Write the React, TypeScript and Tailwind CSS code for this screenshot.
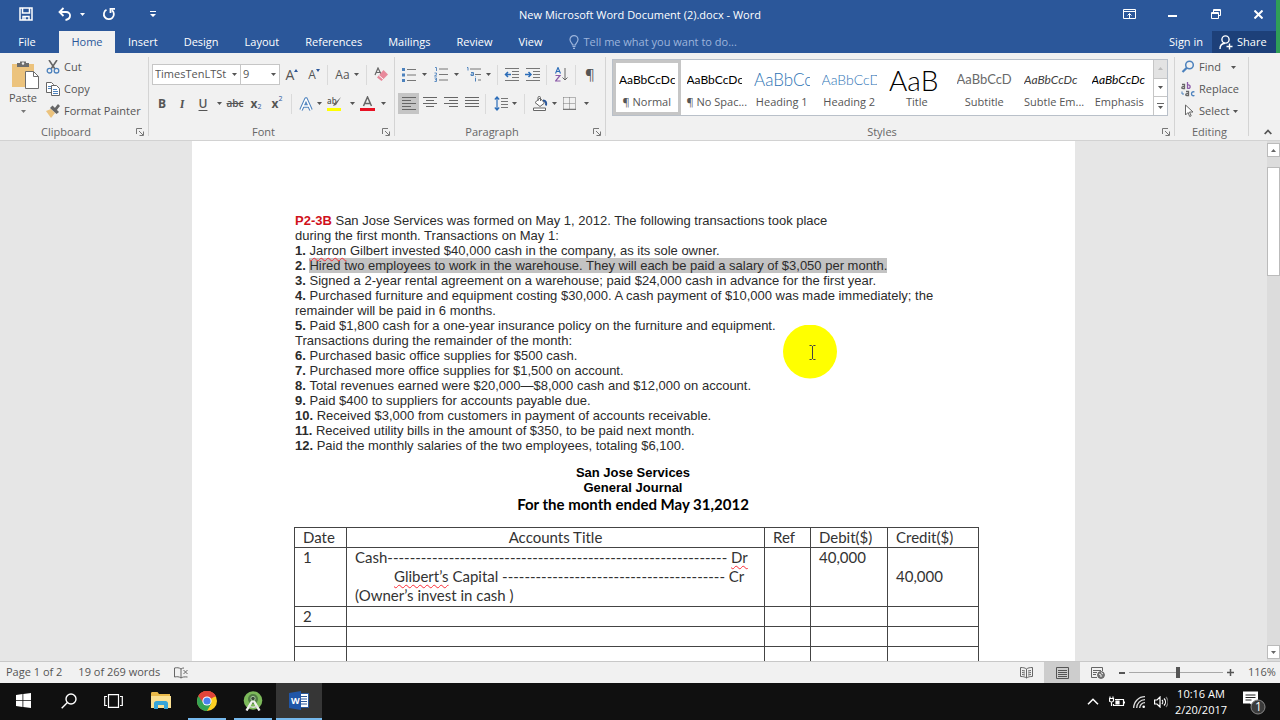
import type { ReactNode } from "react";
import clsx from "clsx";

const tabs = ["Insert", "Design", "Layout", "References", "Mailings", "Review", "View"];

const styleTiles = [
  { name: "¶ Normal", sample: "AaBbCcDc", look: "text-[12px] text-black" },
  { name: "¶ No Spac...", sample: "AaBbCcDc", look: "text-[12px] text-black" },
  { name: "Heading 1", sample: "AaBbCc", look: "text-[17px] font-light text-[#2e74b5]" },
  { name: "Heading 2", sample: "AaBbCcD", look: "text-[14px] font-light text-[#2e74b5]" },
  { name: "Title", sample: "AaB", look: "text-[28px] font-light text-black" },
  { name: "Subtitle", sample: "AaBbCcD", look: "text-[13px] text-[#6a6a6a]" },
  { name: "Subtle Em...", sample: "AaBbCcDc", look: "text-[12px] italic text-[#404040]" },
  { name: "Emphasis", sample: "AaBbCcDc", look: "text-[12px] italic text-black" },
];

const transactions = [
  { no: "3.", text: "Signed a 2-year rental agreement on a warehouse; paid $24,000 cash in advance for the first year." },
  { no: "4.", text: "Purchased furniture and equipment costing $30,000. A cash payment of $10,000 was made immediately; the" },
  { no: "", text: "remainder will be paid in 6 months." },
  { no: "5.", text: "Paid $1,800 cash for a one-year insurance policy on the furniture and equipment." },
  { no: "", text: "Transactions during the remainder of the month:" },
  { no: "6.", text: "Purchased basic office supplies for $500 cash." },
  { no: "7.", text: "Purchased more office supplies for $1,500 on account." },
  { no: "8.", text: "Total revenues earned were $20,000—$8,000 cash and $12,000 on account." },
  { no: "9.", text: "Paid $400 to suppliers for accounts payable due." },
  { no: "10.", text: "Received $3,000 from customers in payment of accounts receivable." },
  { no: "11.", text: "Received utility bills in the amount of $350, to be paid next month." },
  { no: "12.", text: "Paid the monthly salaries of the two employees, totaling $6,100." },
];

function Caret({ className }: { className?: string }) {
  return (
    <svg className={clsx("h-[3px] w-[5px] shrink-0", className)} viewBox="0 0 5 3" fill="currentColor">
      <path d="M0 0h5L2.5 3z" />
    </svg>
  );
}

function Launcher() {
  return (
    <svg className="h-2 w-2" viewBox="0 0 8 8" fill="none" stroke="#777">
      <path d="M.5 6V.5H6M3 3l4 4M7.500 3.500v4h-4" />
    </svg>
  );
}

function Tool({ label, width, active, children }: { label: string; width: string; active?: boolean; children: ReactNode }) {
  return (
    <button
      aria-label={label}
      className={clsx("flex h-[21px] shrink-0 items-center justify-center", width, active && "bg-[#c5c5c5]")}
    >
      {children}
    </button>
  );
}

function Divider() {
  return <span className="mx-[3px] h-5 w-px shrink-0 bg-[#dadada]" />;
}

function Group({ title, className, launcher = true, children }: { title: string; className: string; launcher?: boolean; children: ReactNode }) {
  return (
    <section className={clsx("flex flex-col", className)}>
      <div className="min-h-0 flex-1">{children}</div>
      <div className="flex h-4 items-center gap-1 pr-1">
        <span className="flex-1 text-center text-[#666]">{title}</span>
        {launcher && (
          <button aria-label={`${title} settings`}>
            <Launcher />
          </button>
        )}
      </div>
    </section>
  );
}

function GroupLine() {
  return <span className="my-1 w-px shrink-0 bg-[#d4d4d4]" />;
}

function Lines({ d }: { d: string }) {
  return (
    <svg className="h-[13px] w-[14px]" viewBox="0 0 14 13" stroke="#666" fill="none">
      <path d={d} />
    </svg>
  );
}

function TitleBar() {
  return (
    <div className="grid h-[31px] grid-cols-[1fr_auto_1fr] text-white">
      <div className="flex items-center pb-[3px] pl-[15px]">
        <button aria-label="Save" className="w-[21px]">
          <svg className="mx-auto h-[14px] w-[14px]" viewBox="0 0 14 14" fill="none" stroke="currentColor" strokeWidth="1.500">
            <path d="M1 1h12v12H1zM3.500 1v5h7V1M4 13V9.500h6V13M6 10v3" />
          </svg>
        </button>
        <button aria-label="Undo" className="ml-[22px] w-4">
          <svg className="h-[14px] w-[14px]" viewBox="0 0 14 14" fill="none" stroke="currentColor" strokeWidth="1.800">
            <path d="M5.500 1L1.500 5l4 4M1.500 5H8c5.500 0 5.500 7-.5 8" />
          </svg>
        </button>
        <button aria-label="Undo history" className="ml-1.5 w-[10px]">
          <Caret />
        </button>
        <button aria-label="Repeat" className="ml-3 w-[14px]">
          <svg className="h-[14px] w-[14px]" viewBox="0 0 14 14" fill="none" stroke="currentColor" strokeWidth="1.800">
            <path d="M4.500 2.800a5 5 0 1 0 5.500.5M8.500 6V1.800h4.500" />
          </svg>
        </button>
        <button aria-label="Customize Quick Access Toolbar" className="ml-[34px]">
          <svg className="h-[6px] w-[6px]" viewBox="0 0 6 6" fill="currentColor">
            <path d="M0 0h6v1H0zM0 3h6L3 6z" />
          </svg>
        </button>
      </div>
      <h1 className="self-center">New Microsoft Word Document (2).docx - Word</h1>
      <div className="flex justify-end pb-[3px]">
        <button aria-label="Ribbon Display Options" className="flex w-[43px] items-center justify-center">
          <svg className="h-[10px] w-[13px]" viewBox="0 0 13 10" fill="none" stroke="currentColor">
            <path d="M.5.5h12v9H.5zM.5 2.500h12M6.500 9V4.500M4.500 6.500l2-2 2 2" />
          </svg>
        </button>
        <button aria-label="Minimize" className="flex w-[43px] items-center justify-center">
          <span className="mt-[3px] h-[2px] w-[9px] bg-white" />
        </button>
        <button aria-label="Restore Down" className="flex w-[43px] items-center justify-center">
          <svg className="h-[10px] w-[10px]" viewBox="0 0 10 10" fill="none" stroke="currentColor">
            <path d="M.5 3.500h7v6h-7zM.5 4.500h7M2.500 3V.5h7v6H8M2.500 1.500h7" />
          </svg>
        </button>
        <button aria-label="Close" className="flex w-[43px] items-center justify-center">
          <svg className="h-[9px] w-[9px]" viewBox="0 0 9 9" stroke="currentColor" strokeWidth="2">
            <path d="M.5.5l8 8M8.500.5l-8 8" />
          </svg>
        </button>
      </div>
    </div>
  );
}

function TabRow() {
  return (
    <nav className="flex h-[22px] items-stretch text-white">
      <button className="w-[54px]">File</button>
      <button className="ml-[5px] w-14 bg-[#f1f1f1] text-[#2b579a]">Home</button>
      {tabs.map((t) => (
        <button key={t} className="px-[13px]">
          {t}
        </button>
      ))}
      <label className="ml-[14px] flex items-center gap-1 text-[#9db5dc]">
        <svg className="h-[14px] w-[10px]" viewBox="0 0 10 14" fill="none" stroke="currentColor" strokeWidth="1.200">
          <path d="M3.500 10C3.500 8 1 7.500 1 4.600a4 4 0 0 1 8 0C9 7.500 6.500 8 6.500 10zM3.500 11.500h3M4 13.300h2" />
        </svg>
        <input
          aria-label="Tell me what you want to do"
          placeholder="Tell me what you want to do..."
          className="w-44 bg-transparent outline-none placeholder:text-[#9db5dc]"
        />
      </label>
      <button className="ml-auto px-[9px]">Sign in</button>
      <button className="flex w-[68px] items-center gap-1 bg-[#1d4079] pl-[7px]">
        <svg className="h-[15px] w-[14px]" viewBox="0 0 14 15" fill="none" stroke="currentColor" strokeWidth="1.400">
          <circle cx="6.500" cy="4.500" r="3.600" />
          <path d="M1 14c0-3.500 2-5.600 5-5.800M10.500 8.500v6M7.500 11.500h6" />
        </svg>
        Share
      </button>
    </nav>
  );
}

function ClipboardGroup() {
  return (
    <Group title="Clipboard" className="w-[148px]">
      <div className="flex pt-[3px]">
        <button className="flex w-[46px] flex-col items-center pt-1">
          <svg className="ml-1 h-[30px] w-7" viewBox="0 0 28 30">
            <path d="M1 4h22v23H1z" fill="#ecc37d" />
            <path d="M6 7V3h3V1.500h6V3h3v4z" fill="#6d6d6d" />
            <circle cx="12" cy="3.500" r="1.200" fill="#f1f1f1" />
            <path d="M14.500 11.500h8l5 5v12h-13z" fill="#fff" stroke="#6d6d6d" />
            <path d="M22.500 11.500v5h5" fill="none" stroke="#6d6d6d" />
          </svg>
          <span className="leading-4">Paste</span>
          <Caret className="mt-1 text-[#777]" />
        </button>
        <div className="flex flex-col items-start">
          <button className="flex h-[22px] items-center gap-1">
            <svg className="h-[14px] w-[14px]" viewBox="0 0 14 14" fill="none" strokeWidth="1.300">
              <path d="M3 0l6 9M11 0L5 9" stroke="#666" strokeWidth="1.600" />
              <circle cx="3.500" cy="10.700" r="2.300" stroke="#4d82bd" />
              <circle cx="10.500" cy="10.700" r="2.300" stroke="#4d82bd" />
            </svg>
            Cut
          </button>
          <button className="flex h-[22px] items-center gap-1">
            <svg className="h-[14px] w-[14px]" viewBox="0 0 14 14" fill="#fff" stroke="#666">
              <path d="M.5.5h5l2 2v8h-7z" />
              <path d="M2 4.500h3M2 6.500h3" stroke="#4d82bd" />
              <path d="M5.500 3.500h5l3 3v7h-8z" />
              <path d="M7 7.500h4M7 9.500h5M7 11.500h5" stroke="#4d82bd" />
            </svg>
            Copy
          </button>
          <button className="flex h-[22px] items-center gap-1">
            <svg className="h-[14px] w-[14px]" viewBox="0 0 14 14">
              <path d="M0 7l5-2 4 4-4 5z" fill="#ecc37d" />
              <path d="M4 4l2.500-2.500 6.500 6.500-2.500 2z" fill="#666" />
              <path d="M8 5l4-5 2 2-4 5z" fill="#666" />
            </svg>
            Format Painter
          </button>
        </div>
      </div>
    </Group>
  );
}

function FontGroup() {
  return (
    <Group title="Font" className="w-[245px]">
      <div className="flex flex-col gap-2 pt-[11px] pl-[3px]">
        <div className="flex items-center">
          <span className="relative">
            <select aria-label="Font" className="h-[21px] w-[89px] appearance-none border border-[#c6c6c6] bg-white pl-0.5">
              <option>TimesTenLTSt</option>
            </select>
            <Caret className="pointer-events-none absolute top-[9px] right-1" />
          </span>
          <span className="relative -ml-px">
            <select aria-label="Font size" className="h-[21px] w-10 appearance-none border border-[#c6c6c6] bg-white pl-0.5">
              <option>9</option>
            </select>
            <Caret className="pointer-events-none absolute top-[9px] right-1" />
          </span>
          <Tool label="Grow Font" width="w-6">
            <span className="text-[14px]">A</span>
            <svg className="mb-2 h-[3px] w-1" viewBox="0 0 4 3" fill="#2b579a"><path d="M0 3h4L2 0z" /></svg>
          </Tool>
          <Tool label="Shrink Font" width="w-[20px]">
            <span className="text-[12px]">A</span>
            <svg className="mb-2 h-[3px] w-1" viewBox="0 0 4 3" fill="#2b579a"><path d="M0 0h4L2 3z" /></svg>
          </Tool>
          <Divider />
          <Tool label="Change Case" width="w-8">
            <span className="mr-1 text-[12px]">Aa</span>
            <Caret />
          </Tool>
          <Divider />
          <Tool label="Clear All Formatting" width="w-[22px]">
            <svg className="h-[15px] w-[14px]" viewBox="0 0 14 15" fill="none">
              <path d="M1 8L4 1l3 6M2 5.500h4" stroke="#666" strokeWidth="1.200" />
              <path d="M3 10.500L9.500 3 14 7.500 7.500 14z" fill="#e8899b" />
              <path d="M5 8.500l4.500 4" stroke="#fff" />
            </svg>
          </Tool>
        </div>
        <div className="flex items-center text-[12px]">
          <Tool label="Bold" width="w-5"><b>B</b></Tool>
          <Tool label="Italic" width="w-5"><i className="font-serif font-bold">I</i></Tool>
          <Tool label="Underline" width="w-[22px]"><span className="font-semibold underline underline-offset-2">U</span></Tool>
          <Tool label="Underline style" width="w-[10px]"><Caret /></Tool>
          <Tool label="Strikethrough" width="w-[22px]"><span className="text-[10px] font-semibold line-through">abc</span></Tool>
          <Tool label="Subscript" width="w-5"><b>x</b><span className="mt-2 text-[7px] text-[#2b579a]">2</span></Tool>
          <Tool label="Superscript" width="w-[22px]"><b>x</b><span className="mb-2 text-[7px] text-[#2b579a]">2</span></Tool>
          <Divider />
          <Tool label="Text Effects" width="w-[30px]">
            <svg className="mr-1 h-[14px] w-[14px]" viewBox="0 0 14 14" fill="none" strokeLinejoin="round">
              <path d="M2 13L7 2l5 11M4 9h6" stroke="#4d82bd" strokeWidth="3.600" />
              <path d="M2 13L7 2l5 11M4 9h6" stroke="#fff" strokeWidth="1.600" />
            </svg>
            <Caret />
          </Tool>
          <Tool label="Text Highlight Color" width="w-8">
            <svg className="mr-2 h-[15px] w-[15px]" viewBox="0 0 15 15">
              <text x="0" y="8" fontSize="8" fontWeight="600" fill="#555">ab</text>
              <path d="M14 1l-5 8-3 1 1-2z" fill="#666" />
              <path d="M0 12h14v3H0z" fill="#ff0" />
            </svg>
            <Caret />
          </Tool>
          <Tool label="Font Color" width="w-8">
            <svg className="mr-1.5 h-[15px] w-[15px]" viewBox="0 0 15 15">
              <path d="M3.500 10L7.500 1l4 9M5 7.500h5" fill="none" stroke="#666" strokeWidth="1.500" />
              <path d="M0 12h15v3H0z" fill="#e81123" />
            </svg>
            <Caret />
          </Tool>
        </div>
      </div>
    </Group>
  );
}

function ParagraphGroup() {
  return (
    <Group title="Paragraph" className="w-[210px]">
      <div className="flex flex-col gap-2 pt-[11px] pl-[3px]">
        <div className="flex items-center">
          <Tool label="Bullets" width="w-8">
            <svg className="mr-1.5 h-[14px] w-[14px]" viewBox="0 0 14 14">
              <path d="M0 0h3v3H0zM0 5.500h3v3H0zM0 11h3v3H0z" fill="#4d82bd" />
              <path d="M5 1.500h9M5 7h9M5 12.500h9" stroke="#777" />
            </svg>
            <Caret />
          </Tool>
          <Tool label="Numbering" width="w-8">
            <svg className="mr-1.5 h-[15px] w-[14px]" viewBox="0 0 14 15">
              <path d="M1 .5h1.500V4M.5 6h2v1.500l-2 1.500h2.500M.5 11h2v3.500h-2M1 12.700h1.500" stroke="#4d82bd" fill="none" strokeWidth=".9" />
              <path d="M5 2h9M5 7.500h9M5 13h9" stroke="#777" />
            </svg>
            <Caret />
          </Tool>
          <Tool label="Multilevel List" width="w-8">
            <svg className="mr-1 h-[15px] w-[16px]" viewBox="0 0 16 15">
              <path d="M1 .5h1v3M5 5.500h2.500v3H5V7h2.500M9.500 11v3.500M9.500 9.500v.8" stroke="#4d82bd" fill="none" />
              <path d="M4 2h11M9 7.500h6M12 13h3" stroke="#777" />
            </svg>
            <Caret />
          </Tool>
          <Divider />
          <Tool label="Decrease Indent" width="w-[21px]">
            <svg className="h-[13px] w-[15px]" viewBox="0 0 15 13" fill="none" stroke="#777">
              <path d="M1 .5h14M8 3.500h7M8 6.500h7M8 9.500h7M1 12.500h14" />
              <path d="M7 6.500H1.500M4 4L1.500 6.500 4 9" stroke="#2b6cb8" strokeWidth="1.500" />
            </svg>
          </Tool>
          <Tool label="Increase Indent" width="w-[21px]">
            <svg className="h-[13px] w-[15px]" viewBox="0 0 15 13" fill="none" stroke="#777">
              <path d="M1 .5h14M8 3.500h7M8 6.500h7M8 9.500h7M1 12.500h14" />
              <path d="M0 6.500h5.500M3.500 4L6 6.500 3.500 9" stroke="#2b6cb8" strokeWidth="1.500" />
            </svg>
          </Tool>
          <Divider />
          <Tool label="Sort" width="w-[22px]">
            <svg className="h-[15px] w-[13px]" viewBox="0 0 13 15" fill="none">
              <path d="M.5 6.500L3 .5l2.500 6M1.500 4.500h3" stroke="#2b6cb8" strokeWidth="1.100" />
              <path d="M.5 8.500h4.500l-4.500 5.500H5.500" stroke="#8b5aa8" strokeWidth="1.200" />
              <path d="M10 1v12M7.500 10.500L10 13l2.500-2.500" stroke="#666" />
            </svg>
          </Tool>
          <Divider />
          <Tool label="Show/Hide" width="w-[22px]">
            <span className="text-[15px]">¶</span>
          </Tool>
        </div>
        <div className="flex items-center">
          <Tool label="Align Left" width="w-[21px]" active><Lines d="M0 .5h14M0 3.500h9M0 6.500h14M0 9.500h9M0 12.500h14" /></Tool>
          <Tool label="Center" width="w-[21px]"><Lines d="M0 .5h14M3 3.500h8M0 6.500h14M3 9.500h8" /></Tool>
          <Tool label="Align Right" width="w-[21px]"><Lines d="M0 .5h14M5 3.500h9M0 6.500h14M5 9.500h9" /></Tool>
          <Tool label="Justify" width="w-[21px]"><Lines d="M0 .5h14M0 3.500h14M0 6.500h14M0 9.500h14" /></Tool>
          <Divider />
          <Tool label="Line Spacing" width="w-[32px]">
            <svg className="mr-1 h-[15px] w-[14px]" viewBox="0 0 14 15" fill="none">
              <path d="M3 1v13M.8 3.500L3 1l2.200 2.500M.8 11.500L3 14l2.200-2.500" stroke="#2b6cb8" strokeWidth="1.200" />
              <path d="M7 2.500h7M7 5.500h7M7 8.500h7M7 11.500h7" stroke="#777" />
            </svg>
            <Caret />
          </Tool>
          <Divider />
          <Tool label="Shading" width="w-[32px]">
            <svg className="mr-1 h-[15px] w-[16px]" viewBox="0 0 16 15" fill="none" stroke="#666">
              <path d="M3 6.500L8 2l4.500 5L8 10.500z" fill="#fff" />
              <path d="M6 5V1.500c0-1.500 2.500-1.500 2.500 0V5" />
              <path d="M11 4.500c3 0 3.500 2 3 5" stroke="#2b579a" strokeWidth="2" />
              <path d="M1.500 12h12v2.500h-12z" fill="#fff" />
            </svg>
            <Caret />
          </Tool>
          <Tool label="Borders" width="w-8">
            <svg className="mr-2 h-[13px] w-[13px]" viewBox="0 0 13 13" fill="none" stroke="#777">
              <path d="M.5.5h12v11M.5.5v11M6.500.5v11M.5 6.500h12" strokeDasharray="1 1" />
              <path d="M0 12.500h13" strokeWidth="1.500" />
            </svg>
            <Caret />
          </Tool>
        </div>
      </div>
    </Group>
  );
}

function StylesGroup() {
  return (
    <Group title="Styles" className="min-w-0 flex-1">
      <div className="mx-1.5 mt-1.5 flex h-[57px] border border-[#b9c0c9] bg-white">
        <div className="flex min-w-0 flex-1">
          {styleTiles.map((s, i) => (
            <button
              key={s.name}
              className={clsx("flex min-w-0 flex-1 flex-col border-[3px] px-[3px]", i === 0 ? "border-[#c6c6c6]" : "border-transparent")}
            >
              <span
                className={clsx(
                  "flex h-[30px] w-full items-center overflow-hidden pt-1 font-['Lato',sans-serif] leading-none whitespace-nowrap",
                  s.look,
                )}
              >
                {s.sample}
              </span>
              <span className="w-full text-center leading-5 whitespace-nowrap">{s.name}</span>
            </button>
          ))}
        </div>
        <div className="flex w-[14px] flex-col border-l border-[#c6c6c6]">
          <button aria-label="Previous styles" className="flex flex-1 items-center justify-center bg-[#e3e3e3] text-[#bbb]">
            <Caret className="rotate-180" />
          </button>
          <button aria-label="Next styles" className="flex flex-1 items-center justify-center border-y border-[#c6c6c6]">
            <Caret />
          </button>
          <button aria-label="More styles" className="flex flex-1 flex-col items-center justify-center gap-0.5">
            <span className="h-px w-[7px] bg-[#666]" />
            <Caret />
          </button>
        </div>
      </div>
    </Group>
  );
}

function EditingGroup() {
  return (
    <Group title="Editing" className="w-[73px]" launcher={false}>
      <div className="flex flex-col items-start pt-[3px] pl-[6px]">
        <button className="flex h-[22px] items-center gap-1">
          <svg className="h-[14px] w-[14px]" viewBox="0 0 14 14" fill="none">
            <circle cx="8.500" cy="5" r="3.800" stroke="#4d82bd" strokeWidth="1.500" />
            <path d="M5.800 7.700L1.500 12" stroke="#4d82bd" strokeWidth="2.200" />
          </svg>
          Find
          <Caret className="ml-1.5" />
        </button>
        <button className="flex h-[22px] items-center gap-1">
          {/* a b over a c */}
          <svg className="h-[15px] w-[14px]" viewBox="0 0 14 15" fill="none" strokeWidth="1.300">
            <path d="M1 2.500h2.500v4.200H2c-1.600 0-1.600-2 0-2h1.500" stroke="#666" />
            <path d="M6.500 0v6.700M6.500 3.200c3.500-1.500 3.500 4.500 0 3" stroke="#8b5aa8" />
            <path d="M5 9.500h2.500v4.200H6c-1.600 0-1.600-2 0-2h1.500" stroke="#666" />
            <path d="M13.500 10c-4-1.500-4 5 0 3.500" stroke="#4d82bd" />
            <path d="M1 9.500V12h2" stroke="#4d82bd" strokeWidth="1" />
          </svg>
          Replace
        </button>
        <button className="flex h-[22px] items-center gap-1">
          <svg className="h-[14px] w-[14px]" viewBox="0 0 14 14" fill="#fff" stroke="#666">
            <path d="M4.500 1v10l2.500-2.500 1.700 4 1.500-.7-1.700-3.800H12z" />
          </svg>
          Select
          <Caret />
        </button>
      </div>
    </Group>
  );
}

function Ribbon() {
  return (
    <div className="flex h-[88px] border-b border-[#d2d2d2] bg-[#f1f1f1] text-[#555]">
      <ClipboardGroup />
      <GroupLine />
      <FontGroup />
      <GroupLine />
      <ParagraphGroup />
      <GroupLine />
      <StylesGroup />
      <GroupLine />
      <EditingGroup />
      <GroupLine />
      <div className="flex w-[31px] items-end justify-end pr-2 pb-[5px]">
        <button aria-label="Collapse the Ribbon">
          <svg className="h-[6px] w-2" viewBox="0 0 8 6" fill="none" stroke="#555" strokeWidth="1.800">
            <path d="M.7 5L4 1.500 7.300 5" />
          </svg>
        </button>
      </div>
    </div>
  );
}

const wavy = "relative z-10 underline decoration-red-500 decoration-wavy decoration-1 underline-offset-2";

function Journal() {
  return (
    <table className="w-full table-fixed border-collapse font-['Lato',sans-serif] text-[15px] leading-[19px] text-[#333] [&_td]:border [&_td]:border-[#444] [&_td]:px-2 [&_td]:align-top [&_th]:border [&_th]:border-[#444] [&_th]:px-2 [&_th]:text-left [&_th]:font-normal">
      <colgroup>
        <col className="w-[52px]" />
        <col />
        <col className="w-[46px]" />
        <col className="w-[77px]" />
        <col className="w-[91px]" />
      </colgroup>
      <thead>
        <tr className="h-5">
          <th>Date</th>
          <th><span className="block text-center">Accounts Title</span></th>
          <th>Ref</th>
          <th>Debit($)</th>
          <th>Credit($)</th>
        </tr>
      </thead>
      <tbody>
        <tr className="h-[59px]">
          <td>1</td>
          <td className="whitespace-nowrap">
            <p>Cash{"-".repeat(61)} <span className={wavy}>Dr</span></p>
            <p className="pl-[39px]"><span className={wavy}>Glibert’s</span> Capital {"-".repeat(40)} Cr</p>
            <p>(Owner’s invest in cash )</p>
          </td>
          <td />
          <td>40,000</td>
          <td><p className="pt-[19px]">40,000</p></td>
        </tr>
        {["2", "", "", ""].map((n, i) => (
          <tr key={i} className="h-5">
            <td>{n}</td>
            <td />
            <td />
            <td />
            <td />
          </tr>
        ))}
      </tbody>
    </table>
  );
}

function Workspace() {
  return (
    <main className="flex min-h-0 flex-1 bg-[#e6e6e6]">
      <div className="min-w-0 flex-1 overflow-hidden">
        <article className="relative mx-auto min-h-full w-[883px] bg-white pt-[72px] pr-24 pl-[102px]">
          <div className="pl-px font-['Liberation_Sans',Arial,sans-serif] text-[13px] leading-[15px] whitespace-nowrap text-[#2b2b2b]">
            <p><b className="text-[#d0111b]">P2-3B</b> San Jose Services was formed on May 1, 2012. The following transactions took place</p>
            <p>during the first month. Transactions on May 1:</p>
            <p><b>1.</b> <span className={wavy}>Jarron</span> Gilbert invested $40,000 cash in the company, as its sole owner.</p>
            <p>
              <b>2.</b>{" "}
              <mark className="bg-[#c3c3c3] text-inherit">
                Hired two employees to work in the warehouse. They will each be paid a salary of $3,050 per month.
              </mark>
            </p>
            {transactions.map((t) => (
              <p key={t.text}>
                {t.no && <b>{t.no} </b>}
                {t.text}
              </p>
            ))}
          </div>
          <div className="pt-3 pr-[7px] pb-[14px] text-center font-['Liberation_Sans',Arial,sans-serif] text-[13px] leading-[15px] font-bold text-black">
            <p>San Jose Services</p>
            <p>General Journal</p>
            <p className="font-['Lato',sans-serif] text-[15px] leading-[18px]">For the month ended May 31,2012</p>
          </div>
          <Journal />
          {/* pointer highlight */}
          <svg className="absolute top-[184px] left-[591px] h-[54px] w-[54px]" viewBox="0 0 54 54">
            <circle cx="27" cy="26.500" r="27" fill="#ff0" />
            <path d="M26.500 20.500h2l1 1 1-1h2M29.500 21v13M26.500 34.500h2l1-1 1 1h2" fill="none" stroke="#444" />
          </svg>
        </article>
      </div>
      <div className="flex w-[13px] flex-col bg-[#dcdcdc] pt-0.5">
        <button aria-label="Scroll up" className="flex h-[14px] items-center justify-center border border-[#bbb] bg-white text-[#666]">
          <Caret className="rotate-180" />
        </button>
        <div className="mt-[10px] h-[109px] border border-[#bbb] bg-white" />
        <button aria-label="Scroll down" className="mt-auto mb-0.5 flex h-[14px] items-center justify-center border border-[#bbb] bg-white text-[#666]">
          <Caret />
        </button>
      </div>
    </main>
  );
}

function StatusBar() {
  return (
    <footer className="flex h-[22px] items-center border-t border-[#c8c8c8] bg-[#f1f1f1] pl-[6px] text-[#555]">
      <span>Page 1 of 2</span>
      <span className="ml-4">19 of 269 words</span>
      <button aria-label="Proofing errors" className="ml-[14px]">
        <svg className="h-3 w-[14px]" viewBox="0 0 14 12" fill="none" stroke="#666">
          <path d="M7 2C5 .5 3 .5.500 1v9c2.500-.5 4.500-.5 6.500 1zM7 11c1.500-1 3-1.300 6.500-1M7 2c1-.8 2-1 3-1M9.500 3l4 4M13.500 3l-4 4" />
        </svg>
      </button>
      <div className="ml-auto flex h-full items-center">
        <button aria-label="Read Mode" className="flex w-9 justify-center">
          <svg className="h-3 w-[13px]" viewBox="0 0 13 12" fill="none" stroke="#666">
            <path d="M6.500 2C5 .8 3 .5.500.5v9c2.500 0 4.500.3 6 1.500 1.500-1.200 3.500-1.500 6-1.500v-9c-2.500 0-4.500.3-6 1.500zv9M2 3.500l3 .5M2 5.500l3 .5M2 7.500l3 .5M11 3.500l-3 .5M11 5.500l-3 .5M11 7.500l-3 .5" />
          </svg>
        </button>
        <button aria-label="Print Layout" className="flex h-full w-9 items-center justify-center bg-[#cdcdcd]">
          <svg className="h-3 w-[13px]" viewBox="0 0 13 12" fill="none" stroke="#555">
            <path d="M.5.5h12v11H.5zM2 3.500h9M2 5.500h9M2 7.500h9M2 9.500h9" />
          </svg>
        </button>
        <button aria-label="Web Layout" className="flex w-9 justify-center">
          <svg className="h-3 w-[14px]" viewBox="0 0 14 12" fill="none" stroke="#666">
            <path d="M6 10.500H.5V.5h11V4M2 3.500h8M2 5.500h4M2 7.500h3" />
            <circle cx="10" cy="8" r="3.400" fill="#777" />
            <path d="M8 7l2 1v2M10 5.500l2 1.500" stroke="#f1f1f1" />
          </svg>
        </button>
        <button aria-label="Zoom out" className="flex w-3 justify-center">
          <span className="h-[2px] w-[6px] bg-[#555]" />
        </button>
        <input
          type="range"
          aria-label="Zoom"
          min={0}
          max={100}
          defaultValue={52}
          className="mx-px h-3 w-[94px] appearance-none bg-[linear-gradient(#a8a8a8,#a8a8a8)] bg-[length:100%_1px] bg-center bg-no-repeat [&::-webkit-slider-thumb]:h-[11px] [&::-webkit-slider-thumb]:w-[4px] [&::-webkit-slider-thumb]:appearance-none [&::-webkit-slider-thumb]:bg-[#555]"
        />
        <button aria-label="Zoom in" className="flex w-3 justify-center">
          <svg className="h-[7px] w-[7px]" viewBox="0 0 7 7" stroke="#555" strokeWidth="1.500">
            <path d="M0 3.500h7M3.500 0v7" />
          </svg>
        </button>
        <span className="w-11 pl-3">116%</span>
      </div>
    </footer>
  );
}

function TaskButton({ label, running, active, children }: { label: string; running?: boolean; active?: boolean; children: ReactNode }) {
  return (
    <button aria-label={label} className={clsx("flex h-full w-[46px] flex-col items-center", active && "bg-[#363636]")}>
      <span className="flex flex-1 items-center">{children}</span>
      <span className={clsx("h-[2px]", active ? "w-full" : "w-[38px]", running && "bg-[#76b9ed]")} />
    </button>
  );
}

function Taskbar() {
  return (
    <div className="flex h-[37px] items-center bg-[#101010] text-white">
      <TaskButton label="Start">
        <svg className="h-[15px] w-[15px]" viewBox="0 0 15 15" fill="#fff">
          <path d="M0 2l6.500-1v6H0zM7.300.9L15 0v7H7.300zM0 7.800h6.500V14L0 13zM7.300 7.800H15V15l-7.700-1z" />
        </svg>
      </TaskButton>
      <TaskButton label="Search">
        <svg className="h-4 w-4" viewBox="0 0 16 16" fill="none" stroke="#fff" strokeWidth="1.400">
          <circle cx="10" cy="6" r="5" />
          <path d="M6.400 9.600L.7 15.300" />
        </svg>
      </TaskButton>
      <TaskButton label="Task View">
        <svg className="mr-1 h-[14px] w-[19px]" viewBox="0 0 19 14" fill="none" stroke="#fff" strokeWidth="1.200">
          <path d="M4.500.7h10v12.600h-10zM3 2.500H.7v9H3M16 2.500h2.300v9H16" />
        </svg>
      </TaskButton>
      <TaskButton label="File Explorer">
        <svg className="h-[17px] w-5" viewBox="0 0 20 17">
          <path d="M0 1.500C0 .5.500 0 1.500 0h5l1.500 2h11v14H0z" fill="#e9b949" />
          <path d="M0 4h20v12H0z" fill="#fbe092" />
          <path d="M3 17v-5.500C3 10 4 9 5.500 9h9C16 9 17 10 17 11.500V17h-4v-4H7v4z" fill="#37a5d8" />
        </svg>
      </TaskButton>
      <TaskButton label="Google Chrome" running>
        <svg className="h-5 w-5" viewBox="0 0 20 20">
          <circle cx="10" cy="10" r="10" fill="#fdd023" />
          <path d="M10 10L1.340 5A10 10 0 0 1 18.660 5z" fill="#e0443a" />
          <path d="M10 10l-8.660-5A10 10 0 0 0 10 20l4.300-7.500z" fill="#33a355" />
          <path d="M10 5.500h8.900L18.660 5A10 10 0 0 0 1.340 5l4.300 6z" fill="#e0443a" />
          <circle cx="10" cy="10" r="4.600" fill="#fff" />
          <circle cx="10" cy="10" r="3.600" fill="#4a80ee" />
        </svg>
      </TaskButton>
      <TaskButton label="Android Studio" running>
        <svg className="h-5 w-5" viewBox="0 0 20 20" fill="none">
          <circle cx="10" cy="9.500" r="9.300" fill="#7cb95a" />
          <circle cx="10" cy="8" r="5" fill="#4f7b43" />
          <path d="M9.500 9.500L3.500 19.500M10.500 9.500l6 10" stroke="#f0f0f0" strokeWidth="2.400" />
          <path d="M5 14.500c3 2 7 2 10 0" stroke="#ddd" strokeWidth="1.400" />
          <circle cx="10" cy="7.500" r="2.200" fill="#394a39" stroke="#a8c8a0" />
        </svg>
      </TaskButton>
      <TaskButton label="Word" running active>
        <svg className="h-[19px] w-5" viewBox="0 0 20 19">
          <path d="M10 2.500h9.500v14H10z" fill="#fff" stroke="#2b579a" />
          <path d="M12 5.500h6M12 8h6M12 10.500h6M12 13h6" stroke="#2b579a" />
          <path d="M0 2l12-2v19L0 17z" fill="#2056a8" />
          <text x="2" y="13" fontSize="9" fontWeight="700" fill="#fff">W</text>
        </svg>
      </TaskButton>
      <div className="ml-auto flex items-center">
        <button aria-label="Show hidden icons" className="flex w-6 justify-center">
          <svg className="h-[7px] w-3" viewBox="0 0 12 7" fill="none" stroke="#fff" strokeWidth="1.500">
            <path d="M1 6.300L6 1.200l5 5.100" />
          </svg>
        </button>
        <button aria-label="Battery" className="flex w-[23px] justify-center">
          <svg className="h-3 w-4" viewBox="0 0 16 12" fill="none" stroke="#fff" strokeWidth="1.200">
            <path d="M6 3.500h8.500v6H4.500V8M15.500 5.500v2M1 .5v2M4 .5v2M.5 2.500h4v2c0 2-4 2-4 0zM2.500 6v4" />
            <path d="M7 5h3v3H7z" fill="#fff" />
          </svg>
        </button>
        <button aria-label="Network" className="flex w-[22px] justify-center">
          <svg className="h-3 w-3" viewBox="0 0 12 12" fill="none" stroke="#ddd" strokeWidth="1.300">
            <path d="M.7 12C.7 5.700 5.700.7 12 .7M3.700 12C3.700 7.400 7.400 3.700 12 3.700M6.700 12c0-3 2.300-5.300 5.300-5.300" />
            <circle cx="10.700" cy="10.700" r="1.300" fill="#fff" stroke="none" />
          </svg>
        </button>
        <button aria-label="Volume" className="flex w-[22px] justify-center">
          <svg className="h-3 w-[14px]" viewBox="0 0 14 12" fill="none" stroke="#fff" strokeWidth="1.200">
            <path d="M.6 4H3l3-3v10L3 8H.6zM8 4c1 1 1 3 0 4M10 2.500c2 2 2 5 0 7" />
            <path d="M12 1c2.500 3 2.500 7 0 10" stroke="#777" />
          </svg>
        </button>
        <time className="w-[58px] text-center leading-4">
          10:16 AM
          <br />
          2/20/2017
        </time>
        <button aria-label="1 new notification" className="ml-3 h-7 w-[38px]">
          <svg className="h-[26px] w-6" viewBox="0 0 24 26">
            <path d="M1 2.500h15v12h-4v4l-4-4H1z" fill="#fff" />
            <path d="M3.500 6h10M3.500 8.500h10M3.500 11h6" stroke="#222" />
            <circle cx="16" cy="18" r="7" fill="#3b3b3b" stroke="#888" />
            <text x="13" y="22" fontSize="12" fill="#fff">1</text>
          </svg>
        </button>
      </div>
    </div>
  );
}

export default function App() {
  return (
    <div className="flex h-screen flex-col overflow-hidden font-['Open_Sans','Noto_Sans',sans-serif] text-[11px]">
      <header className="relative bg-[#2b579a]">
        <TitleBar />
        <TabRow />
        <span className="absolute inset-y-0 right-0 w-1 bg-[#2f9e57]" />
      </header>
      <Ribbon />
      <Workspace />
      <StatusBar />
      <Taskbar />
    </div>
  );
}
